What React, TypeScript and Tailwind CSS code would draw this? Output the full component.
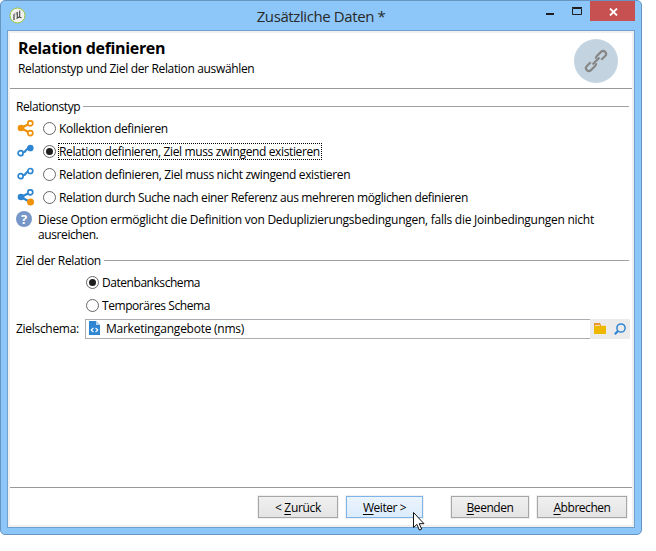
import React from "react";

function Radio({ checked }: { checked?: boolean }) {
  return (
    <span className="flex h-[13px] w-[13px] shrink-0 items-center justify-center rounded-full border border-[#666] bg-white">
      {checked && <span className="h-[7px] w-[7px] rounded-full bg-[#1e1e1e]" />}
    </span>
  );
}

type Kind = "collection" | "required" | "optional" | "search";

function RelationIcon({ kind }: { kind: Kind }) {
  const main = kind === "collection" ? "#ef9109" : "#2e86d3";
  const fork = kind === "collection" || kind === "search";
  return (
    <svg width="18" height="18" viewBox="0 0 18 18" className="shrink-0" fill="none" stroke={main} strokeWidth="1.7">
      {fork ? (
        <>
          <path d="M4 8L13 3.4M4 8L13 13" strokeWidth="2.2" />
          <circle cx="4" cy="8" r="3.3" fill={main} stroke="none" />
          <circle cx="13.3" cy="3.3" r="2.5" fill="white" />
          {kind === "search" ? (
            <circle cx="13.5" cy="13.1" r="3.5" fill="#ef9109" stroke="none" />
          ) : (
            <circle cx="13.3" cy="13.1" r="2.5" fill="white" />
          )}
        </>
      ) : (
        <>
          <path d="M6 9.2C9.5 9.8 8 5.6 11.5 5.6" strokeWidth="2.2" />
          <circle cx="3.6" cy="10.2" r="2.5" fill="white" />
          <circle cx="13.3" cy="5" r="2.5" fill={kind === "required" ? main : "white"} />
        </>
      )}
    </svg>
  );
}

function Option({ kind, checked, text, tracking }: {
  kind: Kind;
  checked?: boolean;
  text: string;
  tracking: string;
}) {
  return (
    <div className="flex h-[23px] items-center pl-[7px]">
      <RelationIcon kind={kind} />
      <span className="w-[8px] shrink-0" />
      <Radio checked={checked} />
      <span
        className={`ml-[2px] flex h-[17px] items-center border border-dotted pr-px ${checked ? "border-black" : "border-transparent"} ${tracking}`}
      >
        {text}
      </span>
    </div>
  );
}

function GroupTitle({ text, tracking }: { text: string; tracking: string }) {
  return (
    <div className="flex h-[17px] items-center pr-[3px] pl-[6px]">
      <span className={tracking}>{text}</span>
      <span className="ml-[3px] h-px flex-1 bg-[#a0a0a0]" />
    </div>
  );
}

function Button({ className, children }: { className: string; children: React.ReactNode }) {
  return (
    <button className={`flex h-[22px] items-center justify-center border tracking-[-0.45px] outline outline-[#f0f0f0] ${className}`}>
      {children}
    </button>
  );
}

export default function App() {
  return (
    <div className="h-[551px] w-[656px] overflow-hidden bg-white font-['Open_Sans','Noto_Sans',sans-serif] text-[12px] leading-[15px] text-black">
      <div className="relative flex h-[535px] w-[642px] flex-col rounded-[5px] border border-[#6795c3] bg-[#8dc7f9] pr-[6px] pb-[6px] pl-[6px]">
        <div className="flex h-[29px] shrink-0">
          <div className="flex w-[60px] items-center pl-[2px]">
            <svg width="17" height="17" viewBox="0 0 17 17">
              <circle cx="8.5" cy="8.5" r="7.5" fill="#f1f2ef" stroke="#9cc83c" />
              <path d="M4 13V7.5L6 6v7z" fill="#8a8a8a" />
              <path d="M6.5 5.5l2-1v3l-2 1z" fill="#bbb" />
              <path d="M10.7 3.5v6.5M7.5 11.5l2.5-1.5 2.5.8M8.3 5v6" fill="none" stroke="#444" strokeWidth="1.1" />
            </svg>
          </div>
          <div className="flex flex-1 items-center justify-center pt-px pl-[30px] text-[15px] leading-[20px] text-[#292929]">
            <span className="tracking-[-0.4px]">Zusätzliche Daten *</span>
          </div>
          <div className="flex w-[90px] shrink-0">
            <svg width="45" height="20" viewBox="0 0 45 20" fill="none">
              <path d="M1 13h8" stroke="#1e1e1e" strokeWidth="2" />
              <path d="M27.5 7.5h9v6h-9zM27 6.5h10" stroke="#1e1e1e" />
            </svg>
            <div className="flex h-[20px] w-[45px] items-center justify-center bg-[#c75050]">
              <svg width="9" height="8" viewBox="0 0 9 8" stroke="white" strokeWidth="1.8" className="mt-px ml-px">
                <path d="M1 .5L8 7.5M8 .5L1 7.5" />
              </svg>
            </div>
          </div>
        </div>
        <div className="flex flex-1 flex-col border border-[#70a0cf] bg-white">
          <div className="flex flex-1 flex-col border-2 border-[#f0f0f0]">
            <div className="flex h-[56px] shrink-0 justify-between border-b border-[#999] pr-[14px] pl-[8px]">
              <div className="pt-[5px]">
                <h1 className="text-[16px] leading-[20px] font-bold"><span className="tracking-[-0.35px]">Relation definieren</span></h1>
                <p className="mt-[3px]"><span className="tracking-[-0.34px]">Relationstyp und Ziel der Relation auswählen</span></p>
              </div>
              <div className="mt-[6px] flex h-[44px] w-[44px] items-center justify-center rounded-full bg-[#c3d4e0]">
                <svg width="24" height="24" viewBox="0 0 24 24" fill="none" stroke="#878787" strokeWidth="2.2">
                  <g transform="translate(12 12) rotate(-45)">
                    <path d="M1.6-1.6Q2.4-2.9 4.2-2.9H10a2.9 2.9 0 0 1 0 5.8H4.6" />
                    <path d="M-1.6 1.6Q-2.4 2.9-4.2 2.9H-10a2.9 2.9 0 0 1 0-5.8H-4.6" />
                    <path d="M-5 0H5" />
                  </g>
                </svg>
              </div>
            </div>
            <div className="flex-1 pt-[9px]">
              <GroupTitle text="Relationstyp" tracking="tracking-[-0.4px]" />
              <div className="pt-[2px]">
                <Option kind="collection" text="Kollektion definieren" tracking="tracking-[-0.34px]" />
                <Option kind="required" checked text="Relation definieren, Ziel muss zwingend existieren" tracking="tracking-[-0.37px]" />
                <Option kind="optional" text="Relation definieren, Ziel muss nicht zwingend existieren" tracking="tracking-[-0.34px]" />
                <Option kind="search" text="Relation durch Suche nach einer Referenz aus mehreren möglichen definieren" tracking="tracking-[-0.375px]" />
              </div>
              <div className="flex pt-[2px] pl-[6px]">
                <div className="flex h-[16px] w-[16px] shrink-0 items-center justify-center rounded-full bg-[#7897c9] text-[13px] leading-[16px] font-bold text-white">?</div>
                <p className="mt-px ml-[6px] whitespace-nowrap">
                  <span className="block tracking-[-0.26px]">Diese Option ermöglicht die Definition von Deduplizierungsbedingungen, falls die Joinbedingungen nicht</span>
                  <span className="block tracking-[-0.4px]">ausreichen.</span>
                </p>
              </div>
              <div className="pt-[10px]">
                <GroupTitle text="Ziel der Relation" tracking="tracking-[-0.34px]" />
              </div>
              <div className="flex flex-col pt-[2px] pl-[76px]">
                <div className="flex h-[23px] items-center gap-[3px]"><Radio checked /><span className="tracking-[-0.45px]">Datenbankschema</span></div>
                <div className="flex h-[23px] items-center gap-[3px]"><Radio /><span className="tracking-[-0.43px]">Temporäres Schema</span></div>
              </div>
              <div className="mt-[2px] flex h-[20px] pl-[6px]">
                <span className="w-[69px] pt-[2px] tracking-[-0.3px]">Zielschema:</span>
                <div className="flex w-[505px] border border-r-0 border-[#abadb3] pl-[3px]">
                  <svg width="11" height="14" viewBox="0 0 11 14" className="mt-[1px]">
                    <path d="M0 0h7l4 4v10H0z" fill="#2e86d3" />
                    <path d="M7 0v4h4z" fill="#b9d8f0" />
                    <path d="M4.4 7L2.2 9l2.2 2M6.6 7l2.2 2-2.2 2" fill="none" stroke="white" strokeWidth="1.1" />
                  </svg>
                  <span className="ml-[6px] pt-px tracking-[-0.25px]">Marketingangebote (nms)</span>
                </div>
                <div className="flex w-[40px] bg-[#ebebeb] pt-[4px] pl-[4px]">
                  <svg width="12" height="11" viewBox="0 0 12 11">
                    <path d="M0 0h6l1 2h5v2H0z" fill="#e9962e" />
                    <path d="M1 2h5v1H1zM7 2h5v1H7z" fill="#f5dfb0" />
                    <path d="M0 3h12v8H0z" fill="#efb800" />
                  </svg>
                  <svg width="12" height="12" viewBox="0 0 12 12" className="ml-[8px]" fill="none" stroke="#2e86d3">
                    <circle cx="7" cy="5" r="4.1" strokeWidth="1.5" />
                    <path d="M4 8L.8 11.2" strokeWidth="2.2" />
                  </svg>
                </div>
              </div>
            </div>
            <div className="flex h-[38px] shrink-0 border-t border-[#999] pt-[8px] pl-[248px]">
              <Button className="w-[80px] border-[#a6a6a6] bg-linear-to-b from-[#f0f0f0] to-[#e4e4e4]"><span className="tracking-[-0.3px]">&lt; <u className="underline-offset-2">Z</u>urück</span></Button>
              <Button className="ml-[8px] w-[77px] border-[#7eb4ea] bg-linear-to-b from-[#ebf4fc] to-[#dcecfc]"><span><u className="underline-offset-2">W</u>eiter &gt;</span></Button>
              <Button className="ml-[28px] w-[78px] border-[#a6a6a6] bg-linear-to-b from-[#f0f0f0] to-[#e4e4e4]"><span><u className="underline-offset-2">B</u>eenden</span></Button>
              <Button className="ml-[8px] w-[90px] border-[#a6a6a6] bg-linear-to-b from-[#f0f0f0] to-[#e4e4e4]"><span><u className="underline-offset-2">A</u>bbrechen</span></Button>
            </div>
          </div>
        </div>
        <svg width="12" height="19" viewBox="0 0 12 19" className="absolute top-[511px] left-[412px]">
          <path d="M.5.5v15l3.4-3.1 2.5 5.7 2.3-1-2.5-5.4h4.8z" fill="white" stroke="#111" />
        </svg>
      </div>
    </div>
  );
}
